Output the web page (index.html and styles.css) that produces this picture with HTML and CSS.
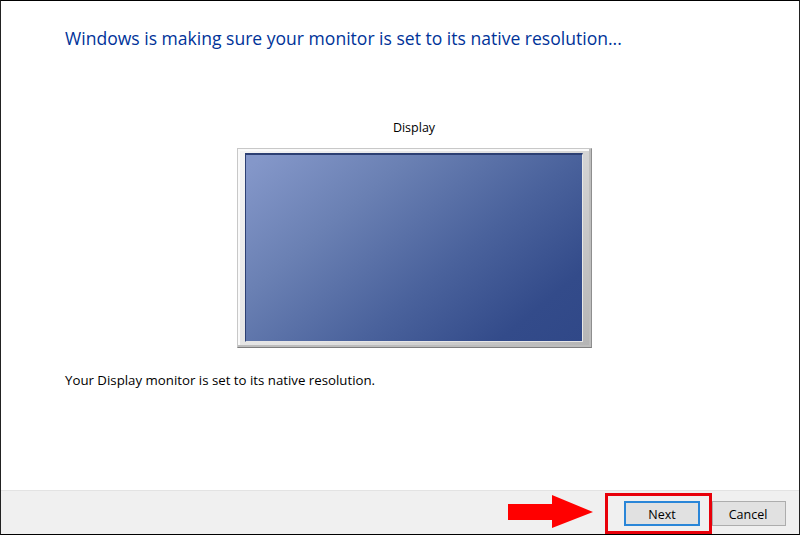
FILE: index.html
```html
<!DOCTYPE html>
<html lang="en">
<head>
<meta charset="utf-8">
<title>Display Color Calibration</title>
<link rel="stylesheet" href="styles.css">
</head>
<body>
<div class="window">
  <main class="content">
    <h1 class="title">Windows is making sure your monitor is set to its native resolution...</h1>
    <div class="monitor-block">
      <div class="monitor-label">Display</div>
      <div class="monitor"><div class="screen"></div></div>
    </div>
    <p class="status">Your Display monitor is set to its native resolution.</p>
  </main>
  <footer class="footer">
    <svg class="arrow" width="86" height="34" viewBox="0 0 86 34"><polygon points="0,9 44,9 44,0 85,17 44,33 44,25 0,25" fill="#f00"/></svg>
    <div class="highlight"><button class="btn btn-default">Next</button></div>
    <button class="btn btn-cancel">Cancel</button>
  </footer>
</div>
</body>
</html>
```
FILE: styles.css
```css
* { box-sizing: border-box; }
html, body { margin: 0; padding: 0; background: #fff; }
body { width: 800px; height: 535px; overflow: hidden; font-family: "Open Sans", "Noto Sans", sans-serif; color: #000; }
.window { width: 800px; height: 535px; display: flex; flex-direction: column; border-top: 1px solid #000; border-left: 1px solid #222; border-right: 1px solid #222; border-bottom: 1px solid #000; background: #fff; }
.content { flex: 1; padding: 25px 0 0 64px; display: flex; flex-direction: column; min-height: 0; }
.title { margin: 0; font-size: 17.56px; line-height: 24px; font-weight: 400; color: #003399; white-space: nowrap; }
.monitor-block { margin: 69px 0 0 172px; width: 355px; display: flex; flex-direction: column; align-items: center; }
.monitor-label { font-size: 12.5px; line-height: 18px; height: 29px; padding-right: 1px; }
.monitor { width: 355px; height: 200px; padding: 4px 8px 5px 7px; border: 1px solid #c8c8c8; border-right-color: #8e8e8e; border-bottom-color: #7e7e7e; background: linear-gradient(135deg, #f4f4f4 0%, #e0e0e0 50%, #b4b4b4 100%); box-shadow: inset -2px -2px 0 #bdbdbd, inset 2px 2px 0 #fafafa; }
.screen { width: 100%; height: 100%; border: 1px solid #2c3f73; border-top-width: 2px; border-bottom-color: #e6e6e6; border-right-color: #e6e6e6; background: linear-gradient(140deg, #8497c9 3%, #6a80b3 30%, #4a629c 60%, #334b8a 85%, #304888 100%); }
.status { margin: 23px 0 0; font-size: 13.25px; line-height: 18px; }
.footer { height: 44px; flex: none; background: #f0f0f0; border-top: 1px solid #e3e3e3; display: flex; align-items: flex-start; padding-left: 507px; }
.arrow { margin-top: 4px; flex: none; }
.highlight { margin: 2px 0 0 11px; width: 107px; height: 41px; border: 3px solid #e8000a; display: flex; align-items: flex-start; flex: none; padding: 5px 0 0 16px; }
.btn { font-family: inherit; font-size: 12.5px; width: 76px; height: 25px; padding: 1px 0 0; background: #e1e1e1; color: #000; border: 1px solid #adadad; }
.btn-default { border: 2px solid #2a86d8; }
.btn-cancel { margin: 10px 0 0 0; width: 74px; padding-right: 2px; }
```
